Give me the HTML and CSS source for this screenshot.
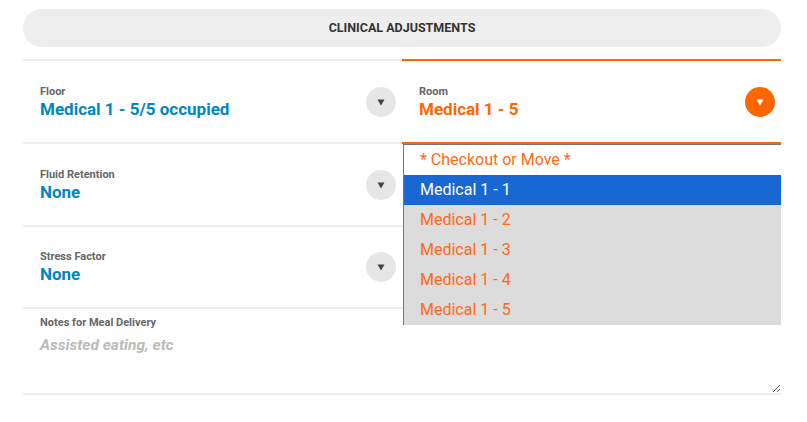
FILE: index.html
```html
<!DOCTYPE html>
<html>
<head>
<meta charset="utf-8">
<link rel="stylesheet" href="styles.css">
</head>
<body>
<div class="page">
  <div class="header">CLINICAL ADJUSTMENTS</div>
  <div class="form">
    <div class="row">
      <div class="field">
        <div class="text"><div class="label">Floor</div><div class="value">Medical 1 - 5/5 occupied</div></div>
        <span class="btn"><svg width="8" height="7" viewBox="0 0 8 7"><polygon points="0.5,0.5 7.5,0.5 4,6.5" /></svg></span>
      </div>
      <div class="field active">
        <div class="text"><div class="label">Room</div><div class="value">Medical 1 - 5</div></div>
        <span class="btn"><svg width="8" height="7" viewBox="0 0 8 7"><polygon points="0.5,0.5 7.5,0.5 4,6.5" /></svg></span>
      </div>
    </div>
    <div class="row">
      <div class="field">
        <div class="text"><div class="label">Fluid Retention</div><div class="value">None</div></div>
        <span class="btn"><svg width="8" height="7" viewBox="0 0 8 7"><polygon points="0.5,0.5 7.5,0.5 4,6.5" /></svg></span>
      </div>
      <div class="field"></div>
    </div>
    <div class="row">
      <div class="field short">
        <div class="text"><div class="label">Stress Factor</div><div class="value">None</div></div>
        <span class="btn"><svg width="8" height="7" viewBox="0 0 8 7"><polygon points="0.5,0.5 7.5,0.5 4,6.5" /></svg></span>
      </div>
      <div class="field short"></div>
    </div>
    <div class="notes">
      <div class="label notes-label">Notes for Meal Delivery</div>
      <textarea class="notes-input" placeholder="Assisted eating, etc"></textarea>
    </div>
    <ul class="dropdown">
      <li class="option first">* Checkout or Move *</li>
      <li class="option selected">Medical 1 - 1</li>
      <li class="option">Medical 1 - 2</li>
      <li class="option">Medical 1 - 3</li>
      <li class="option">Medical 1 - 4</li>
      <li class="option">Medical 1 - 5</li>
    </ul>
  </div>
</div>
</body>
</html>
```
FILE: styles.css
```css
* { box-sizing: border-box; }
html, body { margin: 0; padding: 0; background: #fff; }
body { font-family: Roboto, "Liberation Sans", Arial, sans-serif; }

.page {
  padding: 9px 26px 0 23px;
  width: 807px;
}

.header {
  height: 38px;
  border-radius: 19px;
  background: #eeeeee;
  display: flex;
  align-items: center;
  justify-content: center;
  font-size: 12.5px;
  line-height: 14px;
  padding-bottom: 1px;
  font-weight: 700;
  color: #333;
  margin-bottom: 12px;
}

.form { position: relative; }

.row {
  display: grid;
  grid-template-columns: 379px 379px;
}

.field {
  border-top: 2px solid #eeeeee;
  height: 83px;
  display: flex;
  align-items: center;
  justify-content: space-between;
  padding: 0 6px 0 17px;
}

.field.short { height: 82px; }

.field.active {
  border-top-color: #ff6600;
  border-bottom: 2px solid #ff6600;
  height: 85px;
  margin-bottom: -2px;
  position: relative;
  z-index: 1;
}

.label {
  font-size: 11px;
  line-height: 13px;
  font-weight: 700;
  color: #666;
}

.value {
  font-size: 17px;
  line-height: 20px;
  font-weight: 700;
  color: #0087c1;
  margin-top: 1px;
}

.active .value { color: #ff6600; }

.btn {
  width: 30px;
  height: 30px;
  border-radius: 50%;
  background: #e6e6e6;
  display: flex;
  align-items: center;
  justify-content: center;
  fill: #444;
}

.btn svg { display: block; margin-top: 1px; }

.active .btn { background: #ff6600; fill: #fff; }

.notes {
  border-top: 2px solid #eeeeee;
  border-bottom: 2px solid #eeeeee;
  padding-top: 7px;
  display: flex;
  flex-direction: column;
}

.notes-label { padding-left: 17px; }

.notes-input {
  display: block;
  width: 100%;
  height: 61px;
  margin: 3px 0 0 0;
  padding: 4px 17px 2px 17px;
  border: none;
  outline: none;
  background: transparent;
  font-family: Roboto, "Liberation Sans", Arial, sans-serif;
  font-size: 15.5px;
  font-weight: 700;
  font-style: italic;
  color: #333;
}

.notes-input::placeholder { color: #bbbbbb; opacity: 1; }

.dropdown {
  position: absolute;
  top: 85px;
  left: 380px;
  width: 378px;
  margin: 0;
  padding: 0;
  list-style: none;
  border-top: 1px solid #777;
  border-left: 1px solid #777;
  background: #dcdcdc;
  z-index: 2;
}

.option {
  height: 30px;
  line-height: 30px;
  padding-left: 16px;
  font-size: 16px;
  color: #ff6a13;
}

.option.first { background: #fff; }
.option.selected { background: #1967d2; color: #fff; }
```
